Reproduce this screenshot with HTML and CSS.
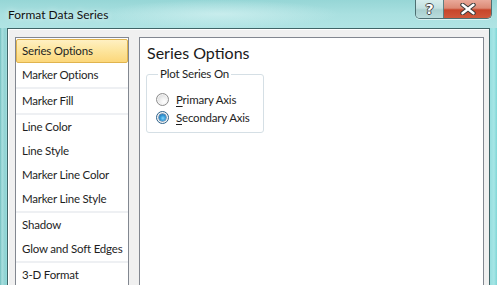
FILE: index.html
```html
<!DOCTYPE html>
<html>
<head>
<meta charset="utf-8">
<link rel="stylesheet" href="styles.css">
</head>
<body>
<div class="window">
  <div class="titlebar">
    <span class="title">Format Data Series</span>
    <div class="caption-btns">
      <div class="cbtn help">?</div>
      <div class="cbtn close">
        <svg width="18" height="12" viewBox="0 0 18 12"><path d="M3.5 1.8 L14.5 10.2 M14.5 1.8 L3.5 10.2" stroke="#3a3a3a" stroke-width="4.4" stroke-linecap="round"/><path d="M3.5 1.8 L14.5 10.2 M14.5 1.8 L3.5 10.2" stroke="#ffffff" stroke-width="2.4" stroke-linecap="round"/></svg>
      </div>
    </div>
  </div>
  <div class="client">
    <ul class="nav">
      <li class="item active">Series Options</li>
      <li class="item">Marker Options</li>
      <li class="sep"></li>
      <li class="item">Marker Fill</li>
      <li class="sep"></li>
      <li class="item">Line Color</li>
      <li class="item">Line Style</li>
      <li class="item">Marker Line Color</li>
      <li class="item">Marker Line Style</li>
      <li class="sep"></li>
      <li class="item">Shadow</li>
      <li class="item">Glow and Soft Edges</li>
      <li class="sep"></li>
      <li class="item">3-D Format</li>
    </ul>
    <div class="panel">
      <h1 class="heading">Series Options</h1>
      <fieldset class="group">
        <legend class="legend">Plot Series On</legend>
        <div class="radio-row"><span class="radio"></span><span class="rlabel"><u>P</u>rimary Axis</span></div>
        <div class="radio-row"><span class="radio checked"></span><span class="rlabel"><u>S</u>econdary Axis</span></div>
      </fieldset>
    </div>
  </div>
</div>
</body>
</html>
```

FILE: styles.css
```css
html, body {
  margin: 0;
  padding: 0;
}
body {
  width: 497px;
  height: 285px;
  overflow: hidden;
  font-family: Lato, "Open Sans", sans-serif;
  font-size: 11.5px;
  letter-spacing: -0.2px;
  color: #000;
}
.window {
  width: 497px;
  height: 285px;
  box-sizing: border-box;
  padding: 0 7px;
  display: flex;
  flex-direction: column;
  background:
    linear-gradient(to right, #6fbdbd 0px, #a9dfdf 2px, #8fd2d2 5px, rgba(143,210,210,0) 7px),
    linear-gradient(to left, #7fd6d6 0px, #a6e6e6 3px, #95dede 7px, rgba(149,222,222,0) 8px),
    linear-gradient(to bottom, #9fdbdb 0%, #a8e0e0 30%, #8fdcdc 100%);
}
.titlebar {
  height: 28px;
  flex: none;
  display: flex;
  align-items: flex-start;
  justify-content: space-between;
  margin: 0 -7px;
  padding: 0 5px 0 8px;
  background:
    radial-gradient(ellipse 120px 14px at 220px 14px, rgba(220,245,245,0.6), rgba(220,245,245,0)),
    linear-gradient(to bottom, #96d6d6 0%, #a9e0e0 50%, #b0e4e4 100%);
}
.title {
  margin-top: 7px;
  font-size: 12px;
  letter-spacing: 0;
  line-height: 16px;
  color: #111;
  text-shadow: 0 0 6px rgba(255,255,255,0.9);
}
.caption-btns {
  display: flex;
  height: 18px;
  margin-right: 0;
  border: 1px solid #4d6f72;
  border-top: none;
  border-radius: 0 0 5px 5px;
  overflow: hidden;
  box-shadow: 0 1px 0 rgba(255,255,255,0.6);
}
.cbtn {
  height: 18px;
  display: flex;
  align-items: center;
  justify-content: center;
}
.help {
  width: 27px;
  border-right: 1px solid #5f7f82;
  background: linear-gradient(to bottom, #d6ecec 0%, #c3e0e0 45%, #a9cfcf 55%, #b9dcdc 100%);
  color: #fff;
  font-family: "DejaVu Sans", sans-serif;
  font-weight: bold;
  font-size: 14px;
  letter-spacing: 0;
  text-shadow: -1px 0 #444, 1px 0 #444, 0 -1px #444, 0 1px #444;
}
.close {
  width: 47px;
  background: linear-gradient(to bottom, #e9a99a 0%, #dc8a75 45%, #c7452a 55%, #d0583b 100%);
}
.client {
  flex: 1;
  min-height: 0;
  display: flex;
  gap: 10px;
  padding: 8px 5px 0 7px;
  background: #f0f0f0;
  border: 1px solid #3f6466;
  border-bottom: none;
  box-shadow: inset 1px 1px 0 #ffffff;
}
.nav {
  list-style: none;
  margin: 0;
  padding: 1px 0 0;
  width: 114px;
  flex: none;
  box-sizing: border-box;
  background: #fff;
  border: 1px solid #828790;
  border-bottom: none;
}
.item {
  height: 24px;
  line-height: 24px;
  padding-left: 6px;
  white-space: nowrap;
  box-sizing: border-box;
  color: #1e1e1e;
}
.item.active {
  border: 1px solid #e0b44e;
  border-radius: 2px;
  line-height: 22px;
  padding-left: 5px;
  background: linear-gradient(to bottom, #fff0c2 0%, #fde6a0 45%, #fcd77a 100%);
}
.sep {
  height: 2px;
  background: #eef0f3;
}
.panel {
  flex: 1;
  background: #fff;
  border: 1px solid #828790;
  border-bottom: none;
  padding: 5px 6px 0;
}
.heading {
  margin: 0;
  font-size: 16px;
  letter-spacing: 0;
  line-height: 20px;
  font-weight: normal;
  color: #1a1a1a;
  padding-left: 1px;
}
.group {
  margin: 3px 0 0;
  width: 118px;
  box-sizing: border-box;
  padding: 8px 4px 6px 9px;
  border: 1px solid #d5dfe5;
  border-radius: 3px;
  min-width: 0;
}
.legend {
  padding: 0 2px;
  margin-left: 2px;
  line-height: 16px;
  color: #1e1e1e;
}
.radio-row {
  height: 18px;
  display: flex;
  align-items: center;
  gap: 7px;
  color: #1e1e1e;
  white-space: nowrap;
}
.radio {
  width: 13px;
  height: 13px;
  box-sizing: border-box;
  border-radius: 50%;
  border: 1px solid #8d8d8d;
  background: radial-gradient(circle at 65% 70%, #ffffff 0%, #f1f1f1 35%, #cfcfcf 100%);
  box-shadow: inset 0 0 0 1px #f4f4f4;
  position: relative;
  flex: none;
}
.radio.checked {
  border-color: #2c628b;
  background: #f4f6f8;
}
.radio.checked::after {
  content: "";
  position: absolute;
  left: 2px;
  top: 2px;
  width: 7px;
  height: 7px;
  border-radius: 50%;
  background: radial-gradient(circle at 55% 60%, #84d6fb 0%, #3aa0dc 40%, #145a9a 100%);
  box-shadow: 0 0 0 0.5px #1b4f80;
}
.rlabel u {
  text-decoration: underline;
  text-underline-offset: 2px;
}
```
